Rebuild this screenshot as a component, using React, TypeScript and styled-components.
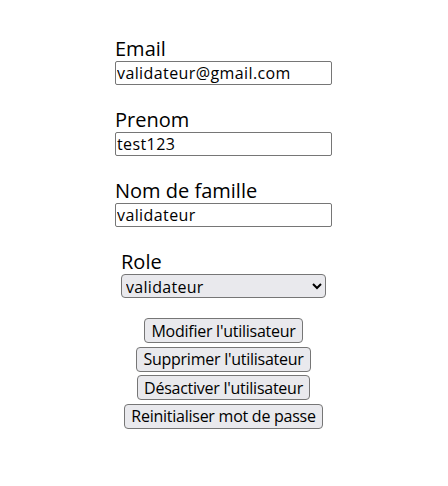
import React from "react";
import styled, { createGlobalStyle } from "styled-components";

const FONT = `"Open Sans", "Noto Sans", sans-serif`;

const Global = createGlobalStyle`
  html, body { margin: 0; padding: 0; background: #ffffff; }
  body { font-family: ${FONT}; color: #000; }
`;

const Page = styled.div`
  display: flex;
  flex-direction: column;
  align-items: center;
  padding-top: 36px;
  padding-right: 1px;
`;

const Fields = styled.div`
  display: flex;
  flex-direction: column;
  gap: 22px;
  width: 217px;
`;

const Field = styled.div<{ $inset?: number }>`
  display: flex;
  flex-direction: column;
  align-items: flex-start;
  padding-left: ${(p) => p.$inset ?? 0}px;
`;

const Label = styled.label`
  font-family: ${FONT};
  font-size: 20px;
  line-height: 25px;
  color: #000;
`;

const Input = styled.input`
  box-sizing: border-box;
  width: 217px;
  height: 24px;
  margin: 0;
  padding: 1px 1px;
  border: 1px solid #767676;
  border-radius: 2px;
  font-family: ${FONT};
  font-size: 16px;
  letter-spacing: 0.4px;
  color: #000;
  background: #fff;
`;

const Select = styled.select`
  box-sizing: border-box;
  width: 205px;
  height: 24px;
  margin: 0;
  font-family: ${FONT};
  font-size: 16px;
  letter-spacing: 0.3px;
  color: #000;
  background-color: #e9e9ed;
  border: 1px solid #767676;
  border-radius: 4px;
`;

const Actions = styled.div`
  display: flex;
  flex-direction: column;
  align-items: center;
  gap: 3.5px;
  margin-top: 20px;
`;

const Button = styled.button`
  box-sizing: border-box;
  height: 25px;
  margin: 0;
  padding: 0 6px;
  font-family: ${FONT};
  font-size: 16px;
  line-height: 22px;
  letter-spacing: -0.25px;
  color: #000;
  background: #e9e9ed;
  border: 1px solid #767676;
  border-radius: 4px;
`;

export default function App() {
  return (
    <Page>
      <Global />
      <Fields>
        <Field>
          <Label>Email</Label>
          <Input defaultValue="validateur@gmail.com" />
        </Field>
        <Field>
          <Label>Prenom</Label>
          <Input defaultValue="test123" />
        </Field>
        <Field>
          <Label>Nom de famille</Label>
          <Input defaultValue="validateur" />
        </Field>
        <Field $inset={6}>
          <Label>Role</Label>
          <Select defaultValue="validateur">
            <option value="validateur">validateur</option>
            <option value="admin">admin</option>
          </Select>
        </Field>
      </Fields>
      <Actions>
        <Button>Modifier l'utilisateur</Button>
        <Button>Supprimer l'utilisateur</Button>
        <Button>Désactiver l'utilisateur</Button>
        <Button>Reinitialiser mot de passe</Button>
      </Actions>
    </Page>
  );
}
